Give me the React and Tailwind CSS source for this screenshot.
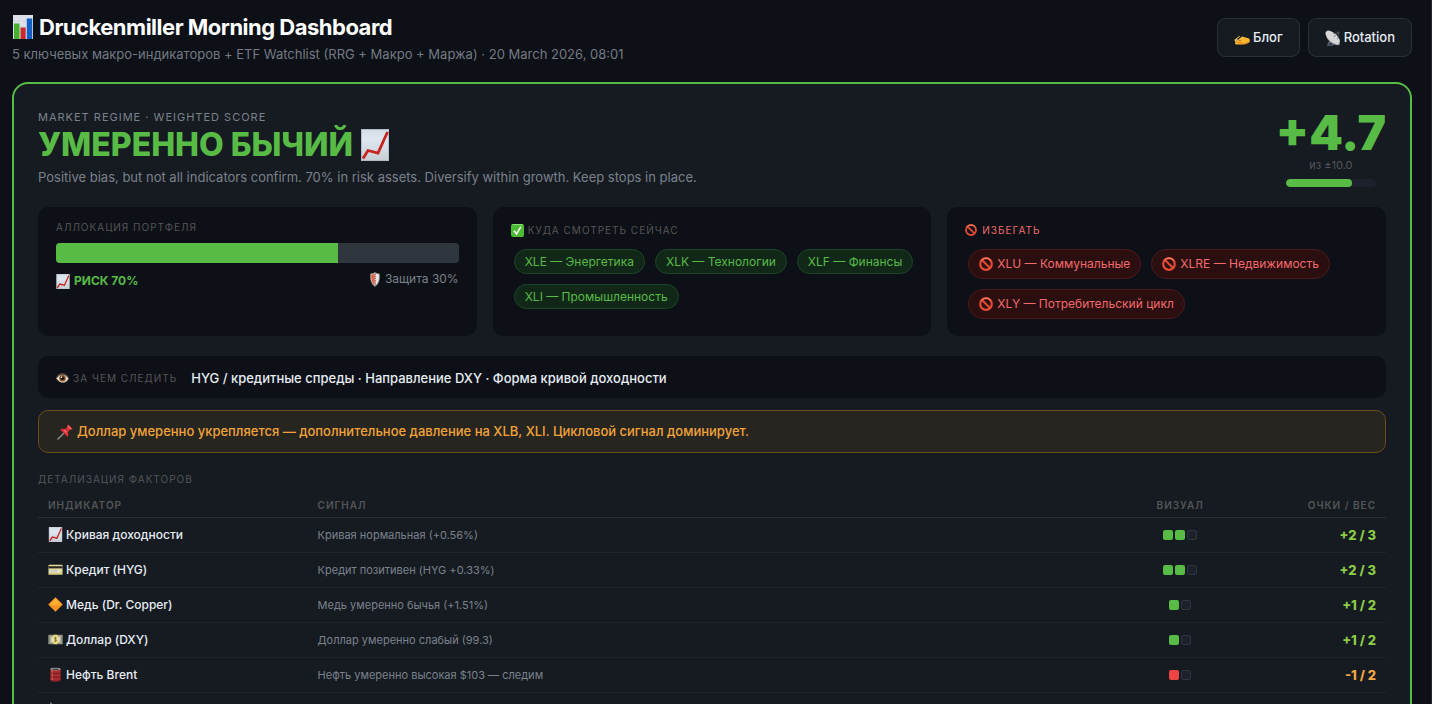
import React from "react";

function ChartUp({ className }) {
  return (
    <svg viewBox="0 0 28 32" className={className} aria-hidden="true">
      <defs>
        <linearGradient id="paperUp" x1="0" y1="0" x2="0" y2="1">
          <stop offset="0" stopColor="#cfdde6" />
          <stop offset="0.3" stopColor="#dfe7f0" />
          <stop offset="1" stopColor="#c6cdd4" />
        </linearGradient>
      </defs>
      <rect width="28" height="32" fill="url(#paperUp)" />
      <path d="M.5.5h27v31H.5z" fill="none" stroke="#b3bcc4" />
      <path d="M2 29.500 7 21.500l10 2.500L26.500 3" fill="none" stroke="#c8231f" strokeWidth="2.800" />
    </svg>
  );
}

function BarChart({ className }) {
  return (
    <svg viewBox="0 0 20 24" className={className} aria-hidden="true">
      <rect width="20" height="24" fill="#dde0ea" />
      <path d="M0 6h20M0 12h20M0 18h20" stroke="#c3c8d4" strokeWidth=".5" />
      <rect x="1" y="8.500" width="5.500" height="15.500" fill="#45b02c" />
      <rect x="7.500" y="12.500" width="5.200" height="11.500" fill="#c92a2d" />
      <rect x="13.800" y="3.500" width="5.400" height="20.500" fill="#1260c4" />
    </svg>
  );
}

function WritingHand({ className }) {
  return (
    <svg viewBox="0 0 16 14" className={className} aria-hidden="true">
      <path d="M.5 9 5 5.200c1.500-.8 3.500.1 4 .6l6 1.600c1 .3 1 3.600 0 4.400L11 13.300 2 13.500c-1.300-.6-1.200-1.500-.5-2Z" fill="#f9b52b" />
      <path d="m.6 9 4.700-3.700c1.200-.5 2.900.1 3.200.9L5 8.900l-3.500 1.200Z" fill="#ffd35c" />
      <path d="m4 9.700 3.500-.4M3.500 11.500l4-.3M6 13.200l5-.3 4-1.800" stroke="#c97716" strokeWidth=".8" fill="none" />
      <path d="M3.200 8.600 12.700.8" stroke="#202020" strokeWidth="1.500" />
      <path d="m2 9.800 1.800-1.500" stroke="#85898d" strokeWidth=".9" />
    </svg>
  );
}

function Dish({ className }) {
  return (
    <svg viewBox="0 0 17 17" className={className} aria-hidden="true">
      <path d="m7 9-4 7h5l3-4M3 14l6-1" stroke="#5a6471" strokeWidth="1.400" fill="none" />
      <path d="M1 1.500C-1 6 5 15.500 13.500 16.200c2-.4 2.500-1.200 2-2.500Z" fill="#a8a9aa" />
      <ellipse cx="8.300" cy="7.700" rx="9.200" ry="4.600" transform="rotate(42 8.300 7.700)" fill="#d6d7d6" />
      <path d="M9 7.500 14.500 3 13.500 10M8.500 4l6-1" stroke="#555b62" strokeWidth=".7" fill="none" />
      <circle cx="14.300" cy="3" r="1.300" fill="#474d54" />
    </svg>
  );
}

function Shield({ className }) {
  return (
    <svg viewBox="0 0 12 15" className={className} aria-hidden="true">
      <path d="M6 .5c1.500 1 2.800 1.300 4.300 1.300.6 5.500-.3 9.800-4.300 12.700C2 11.600 1.100 7.300 1.700 1.800 3.200 1.800 4.500 1.500 6 .5Z" fill="#e6e6e4" stroke="#85807c" strokeWidth=".7" />
      <path d="M5.700 1.400C4.600 2.200 3.500 2.400 2.300 2.500c-.3 4.700.4 8.300 3.400 10.700Z" fill="#e0604a" />
      <path d="M6.300 1.500v12" stroke="#833b32" strokeDasharray="1.200 1" />
    </svg>
  );
}

function Check({ className }) {
  return (
    <svg viewBox="0 0 13 13" className={className} aria-hidden="true">
      <rect width="13" height="13" rx="2" fill="#4cbc35" />
      <path d="M1.500.5h10" stroke="#91dd77" />
      <path d="m3 6.700 2.500 3.200L10 2.700" fill="none" stroke="#fff" strokeWidth="1.500" />
    </svg>
  );
}

function Ban({ className }) {
  return (
    <svg viewBox="0 0 14 14" className={className} aria-hidden="true">
      <circle cx="7" cy="7" r="5.800" fill="none" stroke="#e34a35" strokeWidth="2.200" />
      <path d="m3 3 8 8" stroke="#e34a35" strokeWidth="2.200" />
      <path d="M2.200 3.500a6 6 0 0 1 9.600 0" fill="none" stroke="#fa8b75" />
    </svg>
  );
}

function Eye({ className }) {
  return (
    <svg viewBox="0 0 13 12" className={className} aria-hidden="true">
      <path d="M.5 6.500C2.500 2 10 1 12.500 6.800 10 11.800 3.500 11.500.5 6.500Z" fill="#ebe5e0" stroke="#a08d7e" strokeWidth=".7" />
      <path d="M.8 4.500C4 .5 9.500.7 12.200 5" fill="none" stroke="#746053" strokeWidth=".8" />
      <circle cx="6.500" cy="6.200" r="3.300" fill="#8c572c" />
      <circle cx="6.500" cy="6.200" r="1.800" fill="#1b120d" />
      <circle cx="5.600" cy="5.200" r=".7" fill="#fff" />
    </svg>
  );
}

function Pin({ className }) {
  return (
    <svg viewBox="0 0 16 16" className={className} aria-hidden="true">
      <path d="M.5 15.500 7 9" stroke="#8b9499" strokeWidth="1.200" />
      <path d="M3 5.500c1.500-1 3.300-.9 4.500-.3L10.500 3c-.2-1 0-2 .6-2.700l4.700 4.600c-.8.7-1.800.9-2.700.6l-2.300 3c.7 1.500.7 3-.2 4.500Z" fill="#d92f36" />
      <path d="m7 6 2.500 2.500M10.800 1.800l3.200 3.200" stroke="#f97878" strokeWidth="1.100" />
    </svg>
  );
}

function Card({ className }) {
  return (
    <svg viewBox="0 0 16 16" className={className} aria-hidden="true">
      <rect x=".5" y="3" width="15" height="10.500" rx="1" fill="#e3d999" />
      <rect x=".5" y="4.500" width="15" height="2.300" fill="#282721" />
      <rect x="2" y="8.500" width="10.500" height="2" fill="#e6e8ec" />
      <path d="M3 9.500h7" stroke="#8f97a8" strokeWidth=".7" />
      <path d="M.5 13h15" stroke="#a99f61" />
    </svg>
  );
}

function Diamond({ className }) {
  return (
    <svg viewBox="0 0 16 16" className={className} aria-hidden="true">
      <path d="M8 .2 15.800 8 8 15.800.2 8Z" fill="#f7931e" />
      <path d="M8 1.200 14.500 8 8 9 1.500 8Z" fill="#ffac35" />
    </svg>
  );
}

function Banknote({ className }) {
  return (
    <svg viewBox="0 0 16 16" className={className} aria-hidden="true">
      <rect x=".5" y="3" width="15" height="10" fill="#b5b8a0" />
      <rect x="1.500" y="4" width="13" height="8" fill="none" stroke="#75796a" strokeWidth=".7" />
      <ellipse cx="8" cy="8" rx="4.500" ry="3.800" fill="#e1e0ca" />
      <rect x="6" y="3" width="4" height="10" fill="#f3dc6b" />
      <path d="M9.300 6.300c-1-.8-2.500-.4-2.500.5 0 1.300 2.500.8 2.500 2.200 0 1-1.600 1.300-2.700.5M8 5.200v5.600" stroke="#6e5b1f" strokeWidth=".7" fill="none" />
    </svg>
  );
}

function Barrel({ className }) {
  return (
    <svg viewBox="0 0 16 16" className={className} aria-hidden="true">
      <path d="M2.500 2v12c2 1.800 9 1.800 11 0V2Z" fill="#a92c2e" />
      <path d="M4.500 3v11.500" stroke="#d35452" strokeWidth="1.500" />
      <path d="M2.500 6c2 1.300 9 1.300 11 0M2.500 10c2 1.300 9 1.300 11 0M2.500 14c2 1.500 9 1.500 11 0" fill="none" stroke="#6b1c20" />
      <ellipse cx="8" cy="2.200" rx="5.500" ry="1.500" fill="#a0a3a4" />
      <ellipse cx="8" cy="2.300" rx="4" ry=".8" fill="#4a4344" />
    </svg>
  );
}

function Ruler({ className }) {
  return (
    <svg viewBox="0 0 16 16" className={className} aria-hidden="true">
      <path fillRule="evenodd" d="M2.500 0v15h13Zm2.500 7 5.500 5.800H5Z" fill="#8fa3b5" />
    </svg>
  );
}

const factors = [
  { icon: ChartUp, name: "Кривая доходности", signal: "Кривая нормальная (+0.56%)", score: 2, weight: 3 },
  { icon: Card, name: "Кредит (HYG)", signal: "Кредит позитивен (HYG +0.33%)", score: 2, weight: 3 },
  { icon: Diamond, name: "Медь (Dr. Copper)", signal: "Медь умеренно бычья (+1.51%)", score: 1, weight: 2 },
  { icon: Banknote, name: "Доллар (DXY)", signal: "Доллар умеренно слабый (99.3)", score: 1, weight: 2 },
  { icon: Barrel, name: "Нефть Brent", signal: "Нефть умеренно высокая $103 — следим", score: -1, weight: 2 },
];

const buy = ["XLE — Энергетика", "XLK — Технологии", "XLF — Финансы", "XLI — Промышленность"];
const avoid = ["XLU — Коммунальные", "XLRE — Недвижимость", "XLY — Потребительский цикл"];

function Blocks({ score, weight }) {
  const filled = Math.abs(score);
  return (
    <div className="flex justify-center gap-[2px]">
      {Array.from({ length: weight }, (_, i) => (
        <span
          key={i}
          className={
            "size-[10px] rounded-[2px] " +
            (i >= filled ? "border border-[#2f353e] bg-[#1c212c]" : score > 0 ? "bg-[#58bb46]" : "bg-[#ef4444]")
          }
        />
      ))}
    </div>
  );
}

function NavLink({ icon: Icon, children }) {
  return (
    <a href="#" className="flex items-center gap-[3px] rounded-lg border border-[#2b3038] bg-[#161b22] px-4 py-[9px] text-[13px] leading-[19px] font-medium text-[#e6edf3]">
      <Icon className="size-4" />
      {children}
    </a>
  );
}

export default function App() {
  return (
    <div className="min-h-screen border-r border-[#23262d] bg-[#0d1017] pt-[14px] pr-[19px] pb-6 pl-3 font-['Inter',sans-serif] text-[#e6edf3]">
      <header className="flex items-start justify-between">
        <div>
          <h1 className="flex items-center gap-[5px] text-[22px] leading-[26px] font-bold tracking-[-0.5px] text-white">
            <BarChart className="h-6 w-[22px]" />
            Druckenmiller Morning Dashboard
          </h1>
          <p className="mt-1 text-[13px] leading-5 text-[#747a84]">
            5 ключевых макро-индикаторов + ETF Watchlist (RRG + Макро + Маржа) · 20 March 2026, 08:01
          </p>
        </div>
        <nav className="mt-1 flex gap-2">
          <NavLink icon={WritingHand}>Блог</NavLink>
          <NavLink icon={Dish}>Rotation</NavLink>
        </nav>
      </header>

      <main className="mt-[18px] rounded-2xl border-2 border-[#58bb46] bg-[#161b22] p-6">
        <div className="flex items-start justify-between">
          <div>
            <div className="mt-[1px] text-[11px] leading-4 tracking-[1px] text-[#7b818b] uppercase">Market Regime · Weighted Score</div>
            <h2 className="flex items-center gap-2 text-[32px] leading-10 font-extrabold text-[#58bb46]">
              УМЕРЕННО БЫЧИЙ
              <ChartUp className="h-8 w-7" />
            </h2>
            <p className="mt-[2px] text-[13px] leading-5 text-[#7b818b]">
              Positive bias, but not all indicators confirm. 70% in risk assets. Diversify within growth. Keep stops in place.
            </p>
          </div>
          <div className="flex flex-col items-center">
            <div className="text-5xl leading-[50px] font-black text-[#58bb46]">+4.7</div>
            <div className="text-[11px] leading-[14px] text-[#555]">из ±10.0</div>
            <div className="mt-[7px] h-2 w-[90px] overflow-hidden rounded-full bg-[#1c212c]">
              <div className="h-full w-[73.5%] rounded-full bg-[#58bb46]" />
            </div>
          </div>
        </div>

        <div className="mt-5 grid grid-cols-3 gap-4">
          <section className="rounded-[10px] bg-[#0d1017] px-[18px] py-[14px]">
            <h3 className="text-[10px] leading-3 tracking-[1px] text-[#555] uppercase">Аллокация портфеля</h3>
            <div className="mt-[10px] h-5 overflow-hidden rounded bg-[#30363d]">
              <div className="h-full w-[70%] bg-[#58bb46]" />
            </div>
            <div className="mt-[6px] flex items-start justify-between">
              <span className="mt-[2px] flex items-center gap-1 text-xs leading-5 font-bold text-[#58bb46]">
                <ChartUp className="h-[15px] w-[14px]" />
                РИСК 70%
              </span>
              <span className="flex items-center gap-1 text-xs leading-5 text-[#7b818b]">
                <Shield className="h-[15px] w-3" />
                Защита 30%
              </span>
            </div>
          </section>

          <section className="rounded-[10px] bg-[#0d1017] px-[18px] pt-4 pb-[17px]">
            <h3 className="flex items-center gap-1 text-[10px] leading-[14px] tracking-[1px] text-[#555] uppercase">
              <Check className="size-[13px]" />
              Куда смотреть сейчас
            </h3>
            <ul className="mt-3 flex flex-wrap gap-[10px] pl-[3px]">
              {buy.map((t) => (
                <li key={t} className="rounded-full border border-[#1d4528] bg-[#112718] px-[10px] py-1 text-xs leading-[15px] text-[#58bb46]">
                  {t}
                </li>
              ))}
            </ul>
          </section>

          <section className="rounded-[10px] bg-[#0d1017] px-[18px] pt-4 pb-[17px]">
            <h3 className="flex items-center gap-[5px] text-[10px] leading-[14px] tracking-[1px] text-[#f26b6b] uppercase">
              <Ban className="size-3" />
              Избегать
            </h3>
            <ul className="mt-3 flex flex-wrap gap-[10px] pl-[3px]">
              {avoid.map((t) => (
                <li key={t} className="flex items-center gap-1 rounded-full border border-[#4d191b] bg-[#2b0e10] px-[10px] py-1 text-xs leading-5 text-[#f26b6b]">
                  <Ban className="size-[14px]" />
                  {t}
                </li>
              ))}
            </ul>
          </section>
        </div>

        <section className="mt-5 flex items-center rounded-[10px] bg-[#0d1017] px-[18px] pt-3 pb-[10px]">
          <h3 className="flex items-center gap-1 text-[10px] leading-5 tracking-[1px] text-[#555] uppercase">
            <Eye className="h-3 w-[13px]" />
            За чем следить
          </h3>
          <p className="ml-[14px] text-[13px] leading-5 font-medium">HYG / кредитные спреды · Направление DXY · Форма кривой доходности</p>
        </section>

        <p className="mt-3 flex items-center gap-1 rounded-[10px] border border-[#6d4b1c] bg-[#272520] px-[18px] py-[11px] text-[13px] leading-[19px] font-medium text-[#f1a33a]">
          <Pin className="size-4" />
          Доллар умеренно укрепляется — дополнительное давление на XLB, XLI. Цикловой сигнал доминирует.
        </p>

        <h3 className="mt-5 text-[10px] leading-3 tracking-[1px] text-[#555] uppercase">Детализация факторов</h3>
        <table className="mt-2 w-full table-fixed border-collapse">
          <thead>
            <tr className="h-6 border-b border-[#2b3038] text-[10px] leading-3 tracking-[1px] text-[#555] uppercase">
              <th className="w-[20%] px-[10px] text-left font-semibold">Индикатор</th>
              <th className="px-[10px] text-left font-semibold">Сигнал</th>
              <th className="w-[142px] px-[10px] text-center font-semibold">Визуал</th>
              <th className="w-[10%] px-[10px] text-right font-semibold">Очки / Вес</th>
            </tr>
          </thead>
          <tbody>
            {factors.map(({ icon: Icon, name, signal, score, weight }) => (
              <tr key={name} className="h-[35px] border-b border-[#20252d]">
                <td className="px-[10px] text-xs leading-5 font-medium">
                  <span className="flex items-center gap-[3px]">
                    <Icon className="size-[15px]" />
                    {name}
                  </span>
                </td>
                <td className="px-[10px] text-[11px] leading-5 text-[#7b818b]">{signal}</td>
                <td className="px-[10px]">
                  <Blocks score={score} weight={weight} />
                </td>
                <td className={"px-[10px] text-right text-[13px] leading-5 font-extrabold " + (score > 0 ? "text-[#8bcc45]" : "text-[#f4a742]")}>
                  {score > 0 ? "+" + score : score} / {weight}
                </td>
              </tr>
            ))}
            <tr className="h-[35px]">
              <td className="px-[10px]" colSpan={4}>
                <Ruler className="size-[15px]" />
              </td>
            </tr>
          </tbody>
        </table>
      </main>
    </div>
  );
}
